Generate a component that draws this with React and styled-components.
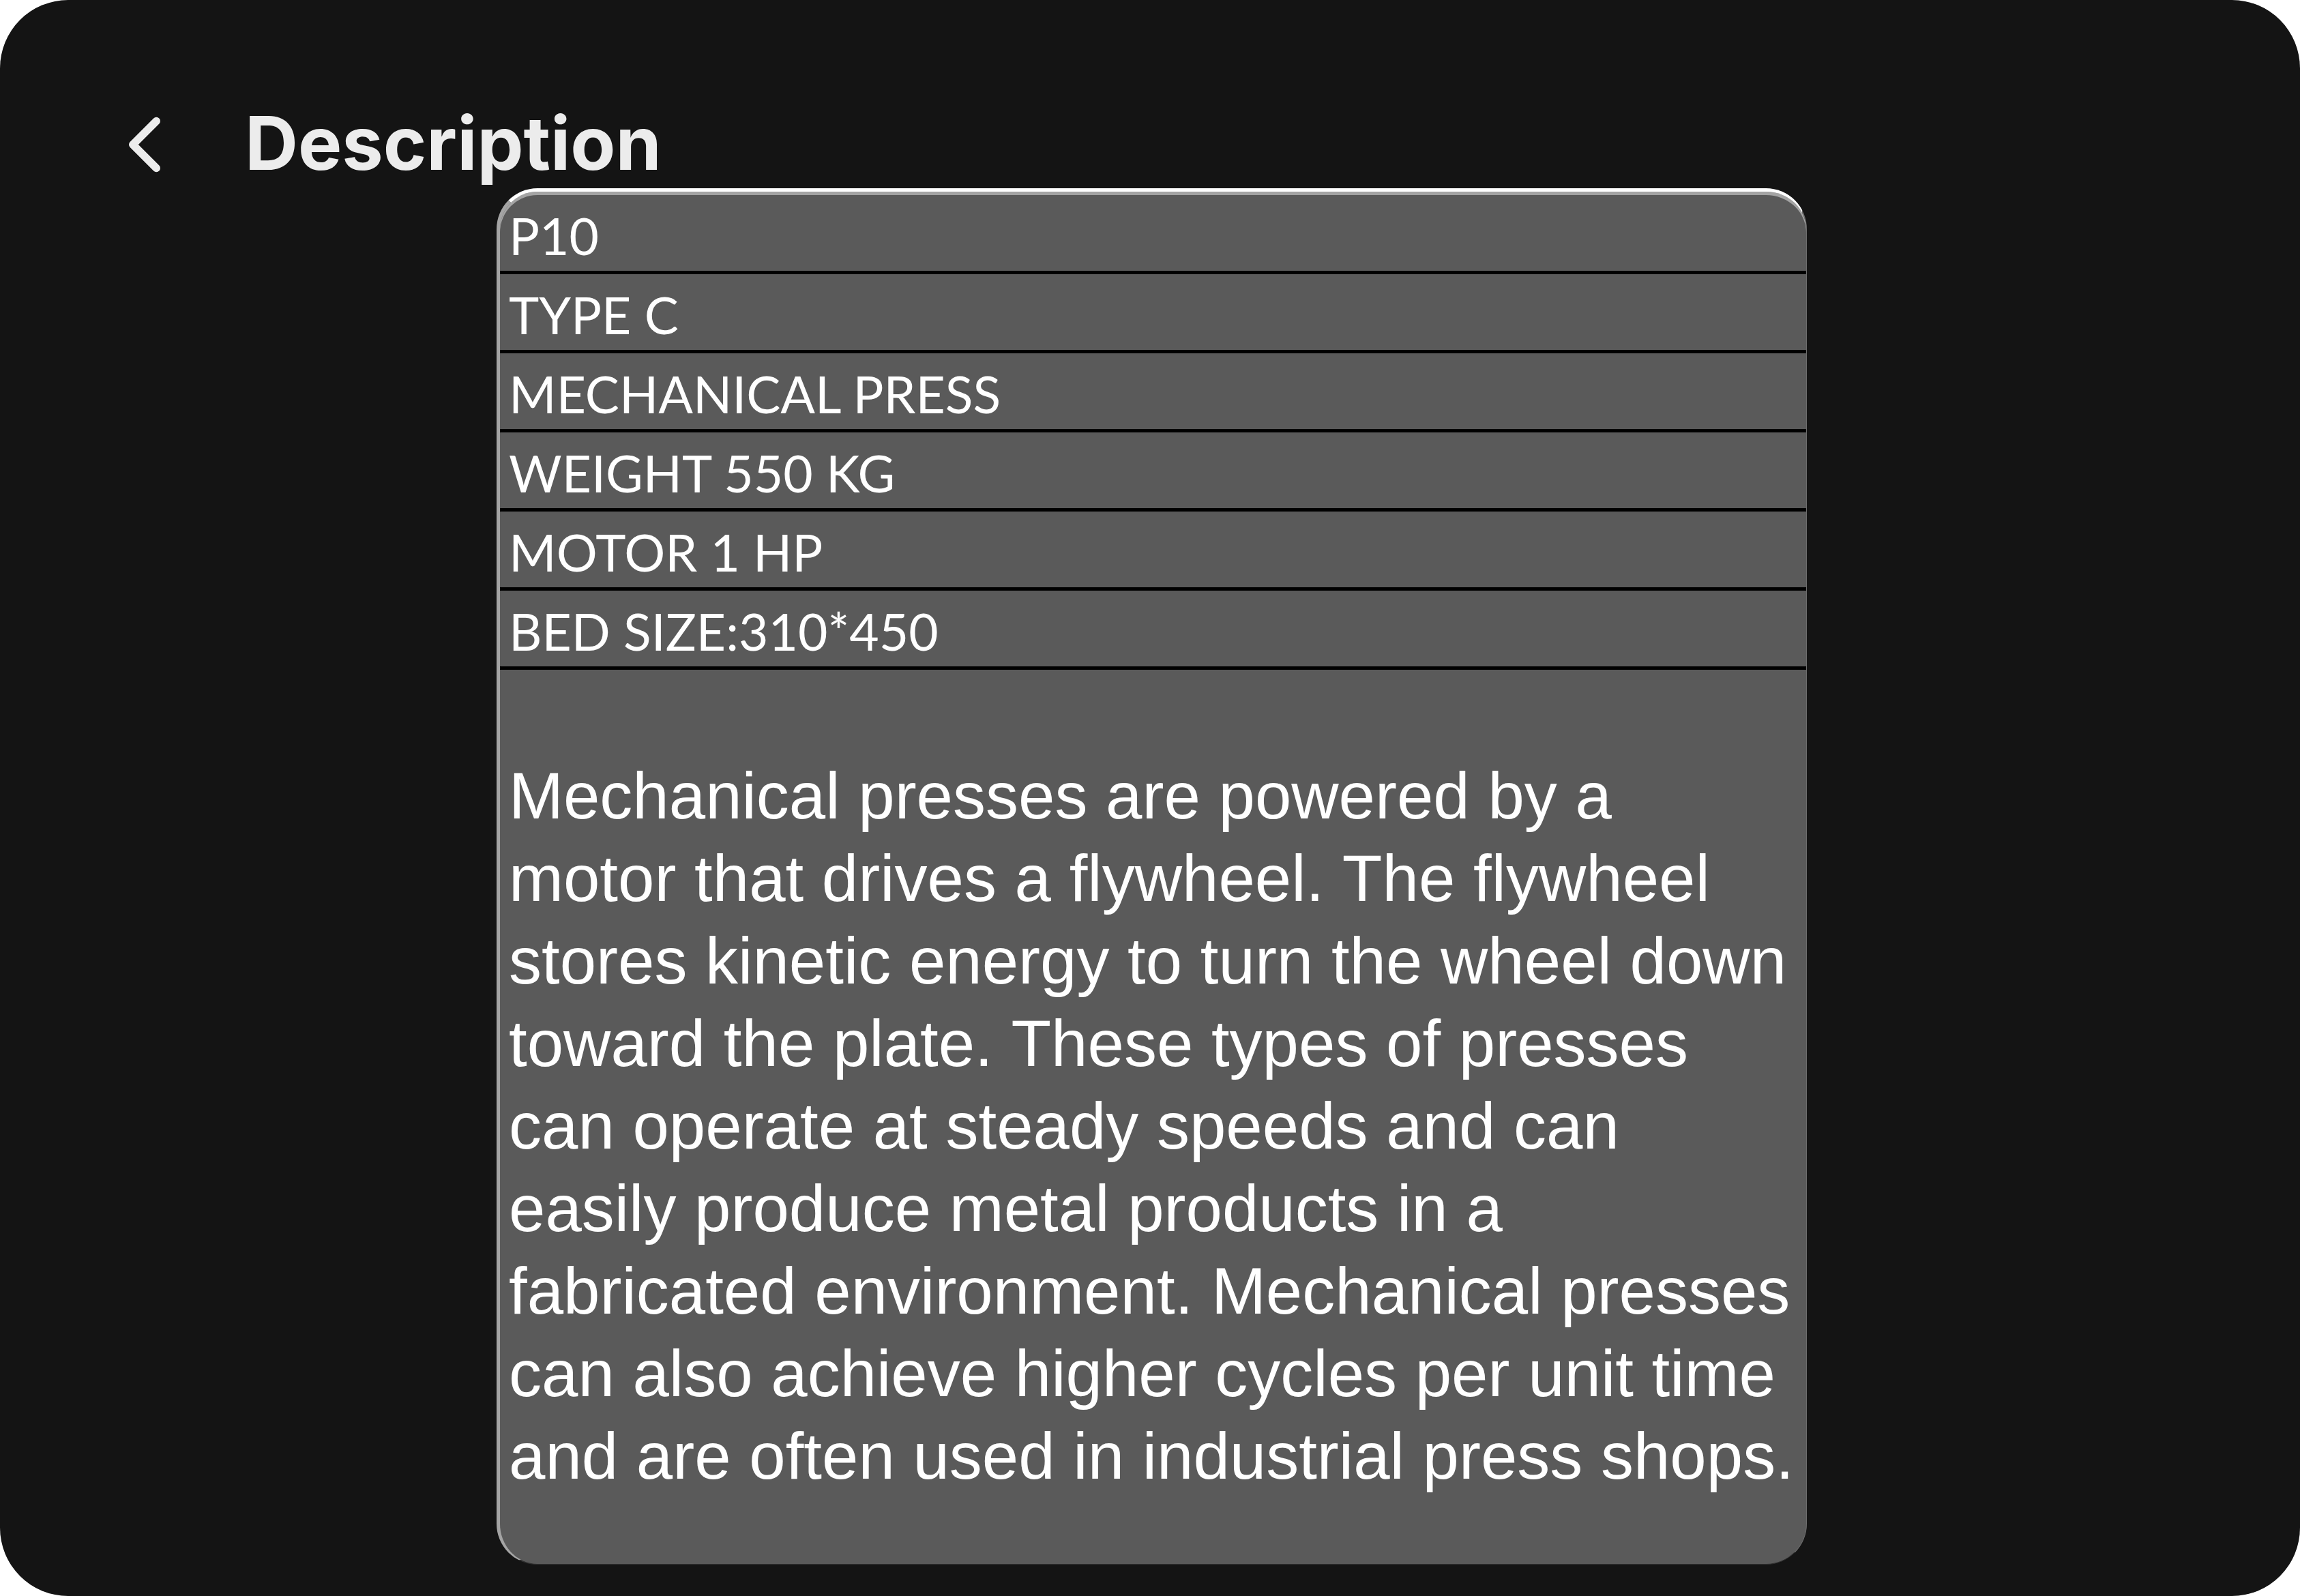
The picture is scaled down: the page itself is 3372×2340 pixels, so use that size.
import React from "react";
import styled, { createGlobalStyle } from "styled-components";
import { ChevronLeft } from "lucide-react";

const specs = [
    "P10",
    "TYPE C",
    "MECHANICAL PRESS",
    "WEIGHT 550 KG",
    "MOTOR 1 HP",
    "BED SIZE:310*450",
];

const description =
    "Mechanical presses are powered by a motor that drives a flywheel. The flywheel stores kinetic energy to turn the wheel down toward the plate. These types of presses can operate at steady speeds and can easily produce metal products in a fabricated environment. Mechanical presses can also achieve higher cycles per unit time and are often used in industrial press shops.";

const GlobalStyle = createGlobalStyle`
    html, body {
        margin: 0;
        padding: 0;
        background: #ffffff;
    }
    * {
        box-sizing: border-box;
    }
`;

const App = () => {
    return (
        <>
            <GlobalStyle />
            <Screen>
                <Header>
                    <BackButton type="button" aria-label="Back">
                        <ChevronLeft size={138} strokeWidth={2} color="#ececec" />
                    </BackButton>
                    <Title>Description</Title>
                </Header>
                <Card>
                    {specs.map((spec) => (
                        <SpecRow key={spec}>{spec}</SpecRow>
                    ))}
                    <Paragraph>{description}</Paragraph>
                </Card>
            </Screen>
        </>
    );
};

const Screen = styled.div`
    width: 3372px;
    height: 2340px;
    background: #141414;
    border-radius: 100px;
    overflow: hidden;
    display: flex;
    flex-direction: column;
`;

const Header = styled.header`
    height: 276px;
    padding: 143px 0 0 143px;
    display: flex;
    align-items: flex-start;
    gap: 78px;
`;

const BackButton = styled.button`
    width: 138px;
    height: 138px;
    padding: 0;
    border: none;
    background: transparent;
    display: flex;
    cursor: pointer;
`;

const Title = styled.h1`
    margin: 0;
    font-family: Inter, "Liberation Sans", sans-serif;
    font-weight: 700;
    font-size: 108px;
    line-height: 134px;
    color: #ececec;
`;

const Card = styled.section`
    margin-left: 728px;
    width: 1921px;
    padding-top: 5px;
    background: #5a5a5a;
    border-top: 5px solid #ffffff;
    border-left: 5px solid #a4a4a4;
    border-right: 1px solid #6e6e6e;
    border-bottom: 1px solid #2e2e2e;
    border-radius: 60px;
    box-shadow: inset 0 5px 0 #a4a4a4;
    display: flex;
    flex-direction: column;
`;

const SpecRow = styled.div`
    height: 116px;
    padding: 8px 16px 0 13px;
    border-bottom: 5px solid #000000;
    font-family: Lato, "Open Sans", sans-serif;
    font-size: 75px;
    line-height: 103px;
    color: #ffffff;
    white-space: nowrap;
`;

const Paragraph = styled.p`
    margin: 0;
    padding: 124px 16px 98px 13px;
    font-family: "Liberation Sans", Arial, sans-serif;
    font-size: 96px;
    line-height: 121px;
    font-kerning: none;
    color: #ffffff;
`;

export default App;
